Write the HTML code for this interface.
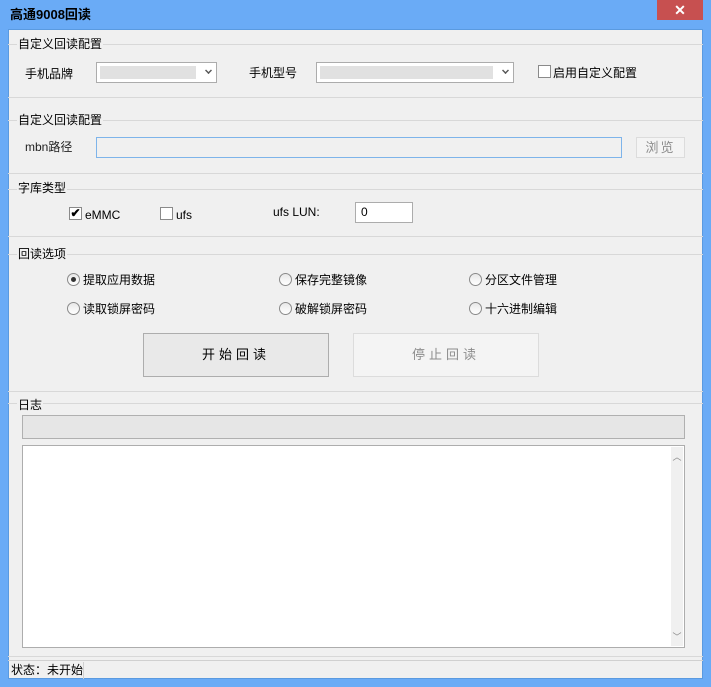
<!DOCTYPE html>
<html><head><meta charset="utf-8"><style>
*{margin:0;padding:0;box-sizing:border-box}
body{width:711px;height:687px;background:#6aabf6;position:relative;overflow:hidden;font-family:"Liberation Sans","Noto Sans CJK SC",sans-serif;font-size:12px;color:#000}
.a{position:absolute}
#client{left:8px;top:29px;width:695px;height:650px;background:#f0f0f0;border:1px solid #5a9ae0}
.hl{position:absolute;left:8px;width:695px;height:1px;background:#d8d8d8}
.t{position:absolute;background:#f0f0f0;padding:0 1px;line-height:14px;white-space:nowrap}
.combo{position:absolute;height:21px;border:1px solid #acacac;background:#fff}
.combo i{position:absolute;left:3px;top:3px;bottom:3px;background:#e1e1e1}
.combo b{position:absolute;right:4px;top:4px;width:7px;height:7px;border-right:2px solid #555;border-bottom:2px solid #555;transform:rotate(45deg) scale(.7)}
.cb{position:absolute;width:13px;height:13px;border:1px solid #8a8a8a;background:#fff}
.rb{position:absolute;width:13px;height:13px;border:1px solid #8a8a8a;border-radius:50%;background:linear-gradient(#e8e8e8,#fff)}
.btn{position:absolute;border:1px solid #adadad;background:#e9e9e9;text-align:center;letter-spacing:4px}
</style></head><body>
<div class="a" style="left:10px;top:7px;font-weight:bold;font-size:13px;line-height:15px">高通9008回读</div>
<div class="a" style="left:657px;top:0;width:46px;height:20px;background:#c75050;color:#fff;text-align:center;font-size:14px;line-height:20px;font-weight:bold">✕</div>
<div class="a" id="client"></div>

<div class="hl" style="top:44px"></div><div class="hl" style="top:97px"></div>
<div class="hl" style="top:120px"></div><div class="hl" style="top:173px"></div>
<div class="hl" style="top:189px"></div><div class="hl" style="top:236px"></div>
<div class="hl" style="top:254px"></div><div class="hl" style="top:391px"></div>
<div class="hl" style="top:403px"></div><div class="hl" style="top:656px"></div>
<div class="hl" style="top:660px;background:#d0d0d0"></div>

<div class="t" style="left:17px;top:37px">自定义回读配置</div>
<div class="t" style="left:24px;top:67px">手机品牌</div>
<div class="combo" style="left:96px;top:62px;width:121px"><i style="right:20px"></i><b></b></div>
<div class="t" style="left:248px;top:66px">手机型号</div>
<div class="combo" style="left:316px;top:62px;width:198px"><i style="right:20px"></i><b></b></div>
<div class="cb" style="left:538px;top:65px"></div>
<div class="t" style="left:552px;top:66px">启用自定义配置</div>

<div class="t" style="left:17px;top:113px">自定义回读配置</div>
<div class="t" style="left:24px;top:140px;color:#222">mbn路径</div>
<div class="a" style="left:96px;top:137px;width:526px;height:21px;border:1px solid #7eb4ea;background:#f0f0f0"></div>
<div class="a" style="left:636px;top:137px;width:49px;height:21px;border:1px solid #dcdcdc;background:#f4f4f4;color:#8d8d8d;text-align:center;line-height:19px;font-size:13px;letter-spacing:2px">浏览</div>

<div class="t" style="left:17px;top:181px">字库类型</div>
<div class="cb" style="left:69px;top:207px;font-size:12px;line-height:11px;text-align:center;font-weight:bold">✔</div>
<div class="t" style="left:84px;top:208px">eMMC</div>
<div class="cb" style="left:160px;top:207px"></div>
<div class="t" style="left:175px;top:208px">ufs</div>
<div class="t" style="left:272px;top:205px">ufs LUN:</div>
<div class="a" style="left:355px;top:202px;width:58px;height:21px;border:1px solid #acacac;background:#fff;padding:3px 5px;line-height:13px">0</div>

<div class="t" style="left:17px;top:247px">回读选项</div>
<div class="rb" style="left:67px;top:273px"><div style="position:absolute;left:3px;top:3px;width:5px;height:5px;border-radius:50%;background:#333"></div></div>
<div class="t" style="left:82px;top:273px">提取应用数据</div>
<div class="rb" style="left:279px;top:273px"></div>
<div class="t" style="left:294px;top:273px">保存完整镜像</div>
<div class="rb" style="left:469px;top:273px"></div>
<div class="t" style="left:484px;top:273px">分区文件管理</div>
<div class="rb" style="left:67px;top:302px"></div>
<div class="t" style="left:82px;top:302px">读取锁屏密码</div>
<div class="rb" style="left:279px;top:302px"></div>
<div class="t" style="left:294px;top:302px">破解锁屏密码</div>
<div class="rb" style="left:469px;top:302px"></div>
<div class="t" style="left:484px;top:302px">十六进制编辑</div>
<div class="btn" style="left:143px;top:333px;width:186px;height:44px;line-height:42px;font-size:13px">开始回读</div>
<div class="btn" style="left:353px;top:333px;width:186px;height:44px;line-height:42px;font-size:13px;border-color:#dcdcdc;background:#f4f4f4;color:#8d8d8d">停止回读</div>

<div class="t" style="left:17px;top:398px">日志</div>
<div class="a" style="left:22px;top:415px;width:663px;height:24px;border:1px solid #b0b0b0;background:#e6e6e6"></div>
<div class="a" style="left:22px;top:445px;width:663px;height:203px;border:1px solid #adadad;background:#fff">
<div class="a" style="right:1px;top:1px;width:12px;bottom:1px;background:#f0f0f0;color:#888;font-size:9px;text-align:center"><div style="margin-top:3px">︿</div><div style="position:absolute;bottom:3px;width:12px">﹀</div></div></div>

<div class="t" style="left:10px;top:663px;font-size:12px">状态：未开始</div>
<div class="a" style="left:83px;top:662px;width:1px;height:17px;background:#d0d0d0"></div>
</body></html>
